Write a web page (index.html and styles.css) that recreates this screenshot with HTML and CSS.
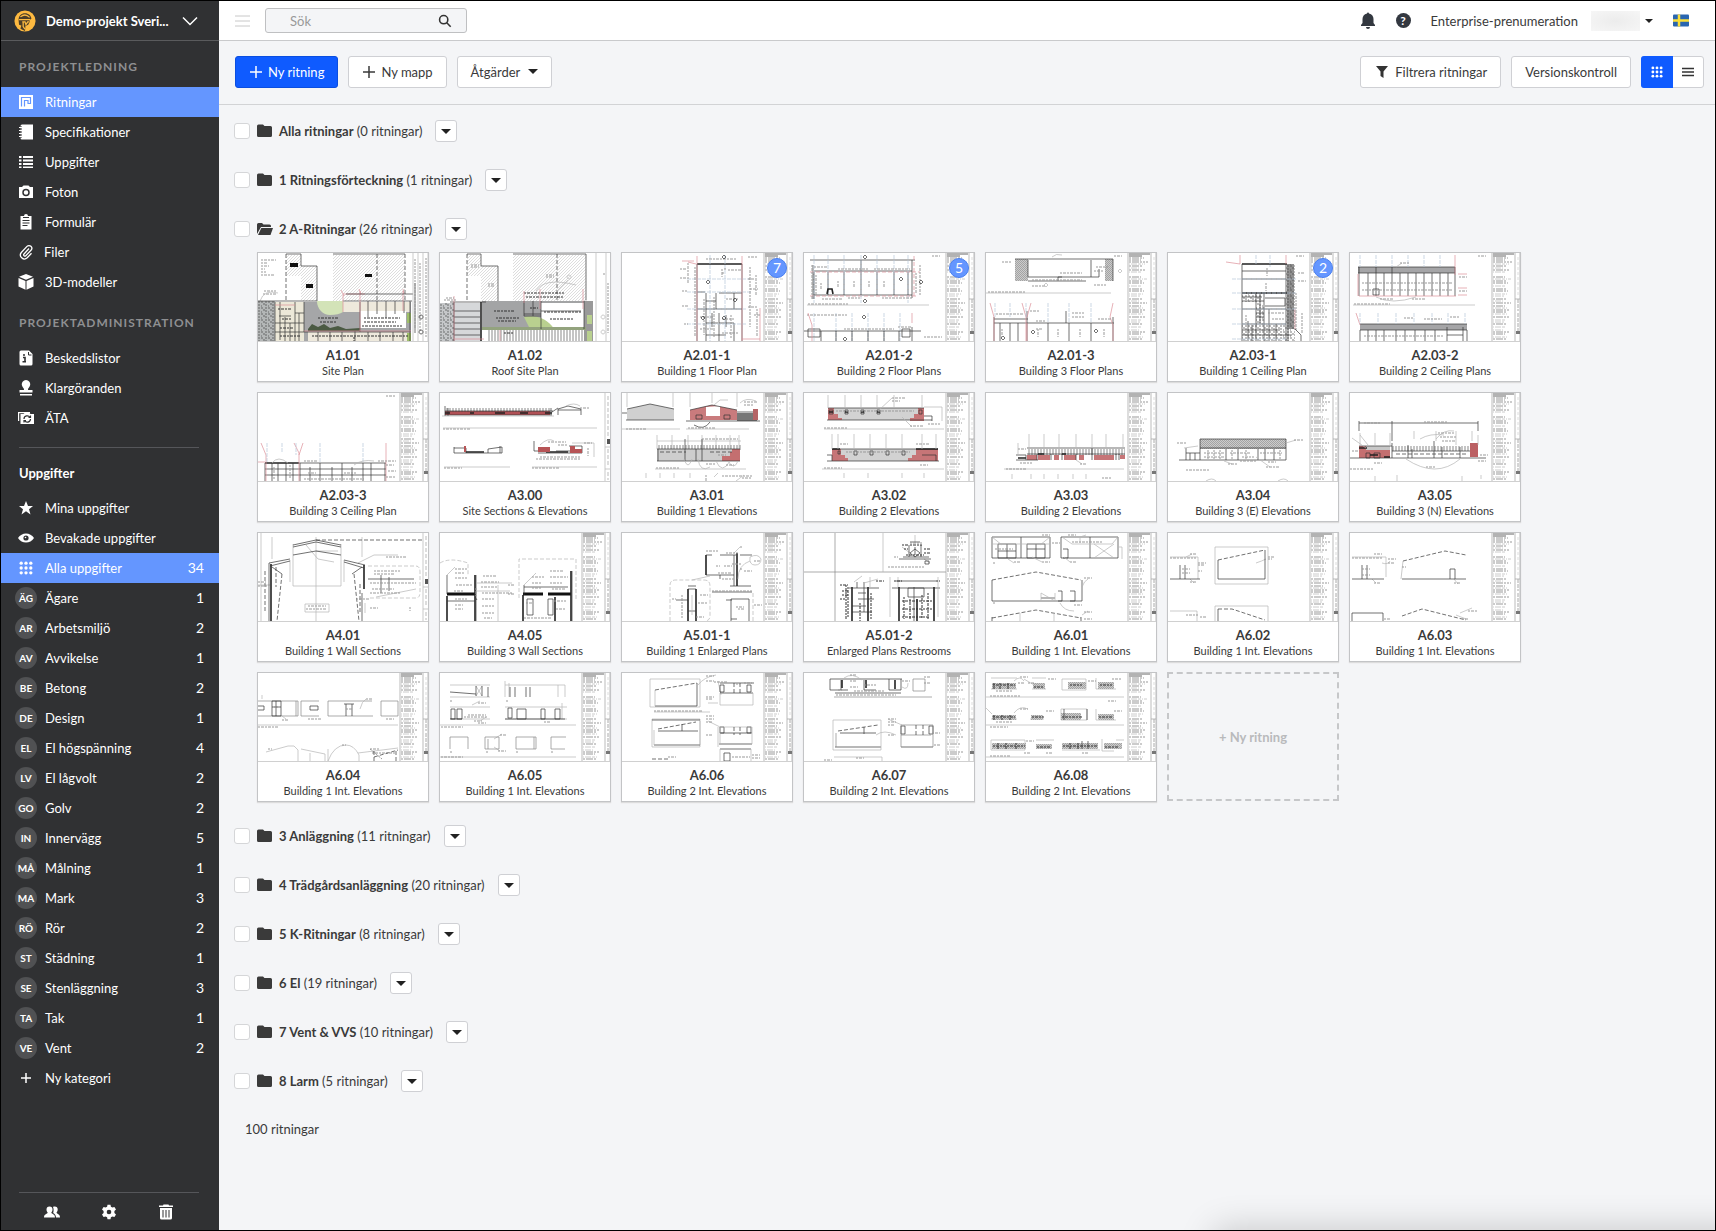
FILE: index.html
```html
<!DOCTYPE html>
<html lang="sv">
<head>
    <meta charset="UTF-8">
    <meta name="viewport" content="width=device-width, initial-scale=1.0">
    <title>Ritningar</title>
    <link rel="stylesheet" href="styles.css">
</head>
<body>
    <aside class="sidebar">
        <button class="project" type="button">
            <svg class="logo" viewBox="0 0 24 24"><circle cx="12" cy="12" r="11.5" fill="#fdb940"/><path d="M5 11c0-5 3-7.500 7-7.500s6.500 2.500 7 6l-2 1.500v2l-1.500 3-3 1.500-.5 5.500-5-2.500 1-3.500-2.500-1z" fill="#4b3d28"/><path d="M7 7.500c3-2.500 7-2.500 10 .5M5.500 10.500h12M9 13h3l1 3 2-3h1.500M10 13v5l2 3" fill="none" stroke="#fdb940" stroke-width="1.400"/></svg>
            <span class="project-name">Demo-projekt Sveri...</span>
            <svg class="chevron" viewBox="0 0 16 10"><path d="M1 1.500l7 7 7-7"/></svg>
        </button>

        <h2 class="nav-title">PROJEKTLEDNING</h2>
        <nav class="nav">
            <a class="nav-item active" href="#"><svg class="icon" viewBox="0 0 16 16"><path d="M1 1h14v14H1z"/><path d="M3.500 12.500v-9h9v6h-3M6.500 12.500v-6H10v3" fill="none" stroke="#6496ff" stroke-width="1.200"/></svg>Ritningar</a>
            <a class="nav-item" href="#"><svg class="icon" viewBox="0 0 16 16"><path d="M4 .5h11v15H4a1.500 1.500 0 0 1-1.500-1.500v-12A1.500 1.500 0 0 1 4 .5z"/><path d="M0 3.500h4M0 6.500h4M0 9.500h4M0 12.500h4" stroke="#303133" stroke-width="2"/><path d="M1 3.500h3M1 6.500h3M1 9.500h3M1 12.500h3" stroke="#fff"/></svg>Specifikationer</a>
            <a class="nav-item" href="#"><svg class="icon" viewBox="0 0 16 16"><path d="M1 2h2.500v2H1zM5 2h10v2H5zM1 5.500h2.500v2H1zM5 5.500h10v2H5zM1 9h2.500v2H1zM5 9h10v2H5zM1 12.500h2.500v1.500H1zM5 12.500h10v1.500H5z"/></svg>Uppgifter</a>
            <a class="nav-item" href="#"><svg class="icon" viewBox="0 0 16 16"><path d="M5.500 1.500h5L12 3h3v11H1V3h3z"/><circle cx="8" cy="8.500" r="3" fill="#fff" stroke="#303133" stroke-width="1.500"/></svg>Foton</a>
            <a class="nav-item" href="#"><svg class="icon" viewBox="0 0 16 16"><path d="M2.500 2H6a2 2 0 0 1 4 0h3.500v13.500h-11z"/><path d="M5 3.500h6M4.500 6.500h7M4.500 9h7M4.500 11.500h5" stroke="#303133"/></svg>Formulär</a>
            <a class="nav-item narrow" href="#"><svg class="icon" viewBox="0 0 16 16"><path d="M11 4.500L6 10a1.200 1.200 0 0 0 1.800 1.700l5.200-5.500a2.700 2.700 0 0 0-4-3.800L3.500 8.200a4 4 0 0 0 5.700 5.600l4.300-4.500" fill="none" stroke="#fff" stroke-width="1.300"/></svg>Filer</a>
            <a class="nav-item" href="#"><svg class="icon" viewBox="0 0 16 16"><path d="M8 0l7 2.800L8 5.800 1 2.800zM.5 4l7 3v8.800l-7-3.300zM15.500 4l-7 3v8.800l7-3.300z"/></svg>3D-modeller</a>
        </nav>

        <h2 class="nav-title">PROJEKTADMINISTRATION</h2>
        <nav class="nav">
            <a class="nav-item" href="#"><svg class="icon" viewBox="0 0 16 16"><path d="M3 .5h8L14.500 4v10a1.500 1.500 0 0 1-1.500 1.500H3A1.500 1.500 0 0 1 1.500 14V2A1.500 1.500 0 0 1 3 .5z"/><path d="M5 7.500h2v4M4.500 11.800H8M5 5h2" fill="none" stroke="#303133" stroke-width="1.600"/><path d="M10.500 2v3h3" fill="none" stroke="#303133"/></svg>Beskedslistor</a>
            <a class="nav-item" href="#"><svg class="icon" viewBox="0 0 16 16"><path d="M8 0a4.200 4.200 0 0 1 4 5.500C11.500 7.500 9.800 8 10 10h4.500v2.500h-13V10H6c.2-2-1.500-2.500-2-4.500A4.200 4.200 0 0 1 8 0zM2 14h12v1.500H2z"/></svg>Klargöranden</a>
            <a class="nav-item" href="#"><svg class="icon" viewBox="0 0 16 16"><path d="M0 2h12v1.200H1.200V11H0z"/><path d="M2.500 4h3l1-1h5l1 1H16v10H2.500z"/><path d="M6 9a3.200 3.200 0 0 1 6-1.500M12.500 9a3.200 3.200 0 0 1-6 1.500M12.500 5.500v2h-2M6 12.500v-2h2" fill="none" stroke="#303133" stroke-width="1.200"/></svg>ÄTA</a>
        </nav>

        <hr class="rule">
        <h2 class="tasks-title">Uppgifter</h2>
        <nav class="nav">
            <a class="nav-item" href="#"><svg class="icon" viewBox="0 0 16 16"><path d="M8 1l2 5h5l-4 3.200 1.500 5.300L8 11.300l-4.500 3.200L5 9.200 1 6h5z"/></svg>Mina uppgifter</a>
            <a class="nav-item" href="#"><svg class="icon" viewBox="0 0 16 16"><path d="M0 8c2-3 4.800-4.500 8-4.500S14 5 16 8c-2 3-4.800 4.500-8 4.500S2 11 0 8z"/><circle cx="8" cy="8" r="2.600" fill="#303133"/><circle cx="7.500" cy="7.500" r=".8" fill="#fff"/></svg>Bevakade uppgifter</a>
            <a class="nav-item active" href="#"><svg class="icon dots" viewBox="0 0 16 16"><use href="#dots"/></svg>Alla uppgifter<span class="count">34</span></a>
            <a class="nav-item" href="#"><span class="tag">ÄG</span>Ägare<span class="count">1</span></a>
            <a class="nav-item" href="#"><span class="tag">AR</span>Arbetsmiljö<span class="count">2</span></a>
            <a class="nav-item" href="#"><span class="tag">AV</span>Avvikelse<span class="count">1</span></a>
            <a class="nav-item" href="#"><span class="tag">BE</span>Betong<span class="count">2</span></a>
            <a class="nav-item" href="#"><span class="tag">DE</span>Design<span class="count">1</span></a>
            <a class="nav-item" href="#"><span class="tag">EL</span>El högspänning<span class="count">4</span></a>
            <a class="nav-item" href="#"><span class="tag">LV</span>El lågvolt<span class="count">2</span></a>
            <a class="nav-item" href="#"><span class="tag">GO</span>Golv<span class="count">2</span></a>
            <a class="nav-item" href="#"><span class="tag">IN</span>Innervägg<span class="count">5</span></a>
            <a class="nav-item" href="#"><span class="tag">MÅ</span>Målning<span class="count">1</span></a>
            <a class="nav-item" href="#"><span class="tag">MA</span>Mark<span class="count">3</span></a>
            <a class="nav-item" href="#"><span class="tag">RÖ</span>Rör<span class="count">2</span></a>
            <a class="nav-item" href="#"><span class="tag">ST</span>Städning<span class="count">1</span></a>
            <a class="nav-item" href="#"><span class="tag">SE</span>Stenläggning<span class="count">3</span></a>
            <a class="nav-item" href="#"><span class="tag">TA</span>Tak<span class="count">1</span></a>
            <a class="nav-item" href="#"><span class="tag">VE</span>Vent<span class="count">2</span></a>
            <a class="nav-item" href="#"><svg class="icon" viewBox="0 0 16 16"><path d="M8 3v10M3 8h10" stroke="#fff" stroke-width="1.500"/></svg>Ny kategori</a>
        </nav>

        <div class="sidebar-footer">
            <button type="button" aria-label="Personer"><svg class="icon" viewBox="0 0 16 16"><path d="M5.500 2.500c2 0 3 1.300 3 3 0 1.500-.6 2.300-1.200 3 .2 1.500 3.700 1.300 3.700 5H0c0-3.700 3.500-3.500 3.700-5-.6-.7-1.200-1.500-1.200-3 0-1.700 1-3 3-3z"/><path d="M9 3c.5-.4 1-.5 1.700-.5 2 0 3 1.300 3 3 0 1.500-.6 2.300-1.200 3 .2 1.500 3.500 1.300 3.500 5h-4c0-2.500-1.200-3.400-2.800-4.500C9.700 7 9.900 5 9 3z"/></svg></button>
            <button type="button" aria-label="Inställningar"><svg class="icon" viewBox="0 0 16 16"><path d="M6.500.8h3l.4 2 1.500.8 2-.7L15 5.500 13.400 7v2l1.600 1.500-1.600 2.600-2-.7-1.500.8-.4 2h-3l-.4-2-1.500-.8-2 .7L1 10.500 2.600 9V7L1 5.500l1.600-2.600 2 .7 1.500-.8z"/><circle cx="8" cy="8" r="2.300" fill="#303133"/></svg></button>
            <button type="button" aria-label="Papperskorg"><svg class="icon" viewBox="0 0 16 16"><path d="M5.500 .5h5l.5 1h4V3H1V1.500h4zM2 4h12v10a1.500 1.500 0 0 1-1.500 1.500h-9A1.500 1.500 0 0 1 2 14z"/><path d="M5 6v7.500M8 6v7.500M11 6v7.500" stroke="#303133"/></svg></button>
        </div>
    </aside>

    <div class="page">
        <header class="topbar">
            <button class="menu" type="button" aria-label="Meny"><svg viewBox="0 0 16 12"><path d="M0 1h15M0 6h15M0 11h15"/></svg></button>
            <div class="search">
                <input type="text" placeholder="Sök" aria-label="Sök">
                <svg viewBox="0 0 16 16"><circle cx="6.500" cy="6.500" r="4.700"/><path d="M10 10l4.500 4.500"/></svg>
            </div>
            <button class="top-icon bell" type="button" aria-label="Aviseringar"><svg viewBox="0 0 16 18"><path d="M7 1.500a1 1 0 0 1 2 0c3 .7 4.500 3 4.500 5.500v4l1.500 2v1H1v-1l1.500-2V7C2.500 4.500 4 2.200 7 1.500zM6 15h4a2 2 0 0 1-4 0z"/></svg></button>
            <button class="top-icon help" type="button" aria-label="Hjälp">?</button>
            <span class="plan">Enterprise-prenumeration</span>
            <button class="account" type="button" aria-label="Konto"><span class="account-name"></span><span class="caret small"></span></button>
            <button class="lang" type="button" aria-label="Svenska"><svg viewBox="0 0 16 13"><rect y=".5" width="16" height="12" rx="1" fill="#2a66b0"/><path d="M6 .5v12M0 6.500h16" stroke="#fbe03a" stroke-width="2.500"/></svg></button>
        </header>

        <div class="toolbar">
            <button class="btn primary" type="button"><svg class="plus" viewBox="0 0 12 12"><path d="M6 0v12M0 6h12"/></svg>Ny ritning</button>
            <button class="btn" type="button"><svg class="plus" viewBox="0 0 12 12"><path d="M6 0v12M0 6h12"/></svg>Ny mapp</button>
            <button class="btn" type="button">Åtgärder<span class="caret big"></span></button>
            <button class="btn filter" type="button"><svg class="funnel" viewBox="0 0 12 12"><path d="M0 0h12L7.500 5.500V12l-3-2V5.500z"/></svg>Filtrera ritningar</button>
            <button class="btn" type="button">Versionskontroll</button>
            <div class="view">
                <button class="on" type="button" aria-label="Rutnät"><svg viewBox="0 0 16 16"><use href="#dots"/></svg></button>
                <button type="button" aria-label="Lista"><svg viewBox="0 0 16 16"><path d="M2 4.500h12M2 8h12M2 11.500h12" stroke="#333" stroke-width="1.400"/></svg></button>
            </div>
        </div>

        <main class="content">
            <div class="folder"><input type="checkbox" id="f0"><svg class="folder-icon" viewBox="0 0 16 14"><use href="#closed"/></svg><label for="f0"><b>Alla ritningar</b> (0 ritningar)</label><button type="button" aria-label="Val"><span class="caret"></span></button></div>
            <div class="folder"><input type="checkbox" id="f1"><svg class="folder-icon" viewBox="0 0 16 14"><use href="#closed"/></svg><label for="f1"><b>1 Ritningsförteckning</b> (1 ritningar)</label><button type="button" aria-label="Val"><span class="caret"></span></button></div>
            <div class="folder open"><input type="checkbox" id="f2"><svg class="folder-icon" viewBox="0 0 16 14"><path d="M0 12V2.500A1.500 1.500 0 0 1 1.500 1H5l1.500 1.500h6A1.500 1.500 0 0 1 14 4v1H4z"/><path d="M4.300 6H16l-2.500 7H1z"/></svg><label for="f2"><b>2 A-Ritningar</b> (26 ritningar)</label><button type="button" aria-label="Val"><span class="caret"></span></button></div>

            <div class="cards">
                <a class="card" href="#">
                    <svg class="thumb" viewBox="0 0 170 88">
                        <rect x="28" y="2" width="15" height="21" fill="url(#hatch)"/><rect x="43" y="13" width="16" height="35" fill="url(#hatch)"/><rect x="75" y="2" width="72" height="46" fill="url(#hatch)"/>
                        <path class="k" d="M28 1h15v12h16v35M75 1h72"/><path class="k dash" d="M28 1v48M147 1v47M119 1v46"/>
                        <path d="M32 10h8v4h-8zM48 31h7v4h-7zM107 21h7v3h-7z" fill="#111"/>
                        <path class="n" d="M3 7h15M3 10h6M3 13h8M3 16h4M3 19h5M3 22h14M6 38h12M5 41h14"/><path class="g" d="M2 48q4-12 18-8"/>
                        <path d="M0 48h17v40H0z" fill="#b4b7b7"/><path d="M17 49h29v39H17z" fill="#ece8d8"/><path d="M46 49h107v39H46z" fill="#a5a6a8"/><path d="M85 49h67v10H85zM50 79h103v9H50z" fill="#eee9dc"/><path d="M102 58h46v17h-46z" fill="#fff"/>
                        <path d="M59 48h26v11c-3 2-7 3-13 3-7 0-13-6-13-14z" fill="#d3e3b8"/><path d="M50 76l4-5 6 3 6-3 6 4 8-2 8 3 14-1v3H50z" fill="#4b5a43"/><path d="M149 60h4v10h-4zM149 80h4v8h-4z" fill="#9fbf6a"/>
                        <path class="k" d="M0 48h59M85 48h69M17 49v39M37 49v39M46 49v30M102 49v30M110 48v16M119 48v13M128 48v17M137 48v13M146 48v12M152 48v40M17 70h29M17 79h136M37 60h9M21 63h12M97 78v10M60 79v9M72 79v9M84 79v9M110 79v9M122 79v9M135 79v9M145 79v9M22 49v38M27 64v24M32 70v18M41 60v28"/>
                        <rect y="48" width="17" height="40" fill="url(#specks)"/><path class="n k" d="M20 56h14M24 66h10M22 75h14M106 65h36M106 69h32M104 73h40M54 83h96M22 83h20M60 65h20M62 69h16M96 84v4"/>
                        <path class="r" d="M85 42v17M102 38v40M145 38v20M46 78h107M85 41h22M17 52h20"/><path class="r" d="M83 37l3 6M101 36l2 5M145 36l1 5"/><path class="k" d="M88 41h67M157 30v50"/>
                        <path class="g" d="M155 0v88M160 0v88M165 0v88M170 0v88"/><path class="n" d="M157 6v70M162 10v68M168 5v80"/><path class="k" d="M163 62a2 2 0 1 0 .1 0zM163 77a2 2 0 1 0 .1 0z"/>
                    </svg>
                    <b>A1.01</b><span>Site Plan</span>
                </a>
                <a class="card" href="#">
                    <svg class="thumb" viewBox="0 0 170 88">
                        <rect x="27" y="2" width="14" height="21" fill="url(#hatch)"/><rect x="41" y="13" width="17" height="35" fill="url(#hatch)"/><rect x="73" y="2" width="73" height="46" fill="url(#hatch)"/>
                        <path class="k" d="M27 1h14v12h17v35M73 1h73v46"/><path class="k dash" d="M27 1v48M117 1v46"/>
                        <path class="n" d="M31 12h8M31 14h8M48 31h7M48 33h7M106 22h8M106 24h8"/>
                        <path d="M0 50h14v38H0z" fill="#c5c7c9"/><path d="M14 50h26v38H14z" fill="#d6d8da"/><path d="M42 48h111v28H42z" fill="#a3a4a5"/><path d="M144 48h9v40h-9z" fill="#999"/>
                        <path d="M101 50h43v25h-43z" fill="#fff"/><path d="M84 64c10-2 20 0 28 9l2 3H90zM147 62h5v9h-5zM147 78h5v10h-5z" fill="#b9d08f"/><path d="M42 74h104v3H42z" fill="#93a37e"/>
                        <rect x="48" y="77" width="96" height="11" fill="url(#ribs)"/>
                        <path class="k thick" d="M41 49v39"/><path class="k" d="M10 49h36M14 49v39M14 58h26M14 64h26M14 70h26M14 76h26M14 82h26M84 48v15h17M93 48v15M101 48v28M101 58h40M84 61h17M144 48v28"/>
                        <path class="n k" d="M54 58h20M56 65h24M58 68h18M104 59h38M110 66h24M84 40h40M86 44h38M90 55h8M64 80h10"/>
                        <path class="r" d="M14 43v45M100 36v20M84 38v12M60 77v11M14 86h30M143 36v20"/><path class="g" d="M96 38q8-14 40-6M129 22a2 2 0 1 0 .1 0M128 27l-10 10M163 62a2 2 0 1 0 .1 0M163 77a2 2 0 1 0 .1 0M156 0v88M166 0v88M146 2v46"/>
                        <path class="n" d="M164 20v3M168 30v50M4 47h12M6 45h8"/><rect y="50" width="14" height="38" fill="url(#specks)"/>
                    </svg>
                    <b>A1.02</b><span>Roof Site Plan</span>
                </a>
                <a class="card" href="#">
                    <svg class="thumb" viewBox="0 0 170 88">
                        <path class="k thick" d="M75 11h45"/><path class="k" d="M75 11v77M120 11v77M75 39h8M75 56h45M84 40v48M94 40v16M84 48h10M97 40h23M97 60v28M104 62v12M112 70v18M84 70h12M90 60v14M84 82h20M112 40v16M97 70h15"/>
                        <path class="b" d="M65 26h64M65 56h60M65 71h60M88 2v86M103 2v86M65 39h64"/><path class="r" d="M75 3v85M120 3v85M138 55v33M120 86h18M66 9l8 2M60 8h12"/>
                        <path class="n" d="M58 16h6M58 25h6M60 38h5M60 53h6M62 71h4M102 16h2M100 20h3M106 17h14M126 4h10M126 26h6M128 36h8M126 54h10M132 62h6M78 64h14M78 76h14M100 66h12M100 80h16M84 6h30M104 46h12"/>
                        <path class="n" d="M82 46v36M92 44v40M100 16v8M109 62v24M134 22v20M128 14v60M135 56v28M73 14v70M66 10v20"/>
                        <path class="k" d="M86 27l2 2-2 2-2-2zM113 45l2 2-2 2-2-2zM102 63l2 2-2 2-2-2zM81 63l2 2-2 2-2-2zM102 2l2 2-2 2-2-2z"/>
                        <use href="#titleblock"/>
                    </svg>
                    <i class="badge">7</i><b>A2.01-1</b><span>Building 1 Floor Plan</span>
                </a>
                <a class="card" href="#">
                    <svg class="thumb" viewBox="0 0 170 88">
                        <path class="k" d="M6 7h105M10 19v27M24 19v23M40 19v23M57 7v35M73 19v23M90 19v23M104 19v23M10 42h98M10 18h98M108 7v38M9 12v34"/><path class="r dash" d="M6 19h110M6 43h108M110 3v42"/>
                        <path class="b" d="M10 2v48M24 2v40M40 2v40M57 2v48M73 2v40M90 2v40M104 2v48M10 60v28M32 60v28M48 60v28M64 60v28M80 60v28M96 60v28"/>
                        <path class="g" d="M3 52h122"/><path class="n" d="M4 51h40M17 30v6M34 28v6M50 28v6M65 28v6M80 28v6M10 14h14M34 16h30M70 16h36M18 46h20M44 45h12M78 45h30M128 3h8M112 20v20M116 12v30M3 62h40M40 76h50M94 74h14M120 84h18M8 12v34M12 22v20"/>
                        <path class="k thick" d="M23 41l1-5h4l1 5"/><path class="k" d="M0 78h117M17 78v10M32 78v10M48 78v10M64 78v10M80 78v10M95 78v10M108 74v14M4 76h12v8H4zM98 76h8v8h-8zM61 2l2 2-2 2-2-2zM97 24l2 2-2 2-2-2zM117 27l2 2-2 2-2-2zM60 62l2 2-2 2-2-2zM41 84l2 2-2 2-2-2zM61 46l2 2-2 2-2-2z"/>
                        <path class="r" d="M4 60l4 12v16M108 60v10"/>
                        <use href="#titleblock"/>
                    </svg>
                    <i class="badge">5</i><b>A2.01-2</b><span>Building 2 Floor Plans</span>
                </a>
                <a class="card" href="#">
                    <svg class="thumb" viewBox="0 0 170 88">
                        <rect x="29" y="6" width="13" height="22" fill="url(#dense)"/><rect x="119" y="6" width="8" height="22" fill="url(#dense)"/>
                        <path class="k" d="M29 6h98v22M42 7v17h34M105 7v17H72v4M42 28h58M105 24h8v-8"/><path class="n" d="M46 27h50M74 20h22M16 9h10M46 33h14M108 18h10M110 14h12M108 32h12M128 3h8"/><path class="g" d="M0 40h125M66 4q4-4 10-2M134 16l2 2-2 2-2-2zM60 30l2 2-2 2-2-2z"/><path class="n" d="M2 39h38"/>
                        <path class="k" d="M8 66h34M8 70h120M8 64v24M14 70v18M24 70v18M32 70v18M41 58v30M62 70v18M83 70v18M105 70v18M127 64v24M80 58v12M47 77l2 2-2 2-2-2zM17 83l2 2-2 2-2-2zM110 76l2 2-2 2-2-2z"/>
                        <path class="r" d="M4 50l4 14v24M36 50l4 14v24M45 50l-4 14M127 50l-3 14 3 8v16M41 70v18"/><path class="b" d="M9 50v14M24 50v14M40 50v14M62 50v20M83 50v20M105 50v20"/>
                        <path class="n" d="M10 61h28M44 58h10M50 68h10M86 60h12M112 66h14M16 76v8M52 76v8M72 76v8M94 76v8M118 76v8M50 76h6M86 64h12"/>
                        <use href="#titleblock"/>
                    </svg>
                    <b>A2.01-3</b><span>Building 3 Floor Plans</span>
                </a>
                <a class="card" href="#">
                    <svg class="thumb" viewBox="0 0 170 88">
                        <path class="k thick" d="M74 11h45M74 40h45"/><path class="k" d="M74 11v77M118 11v77M74 18h44M74 26h44M74 48h22M74 56h44M74 71h44M96 40v48M88 40v48M80 68v20M74 77h38M74 82h50M84 72v16M101 56v32M108 71v17M88 60h8M88 64h8M92 40v30M74 44h20M97 45h20v8H97"/>
                        <path d="M119 11h7v65h-7z" fill="#909090"/><path d="M118 11h9v77h-9zM74 41h20v8H74zM88 50h8v38h-8zM74 72h44v16H74z" fill="url(#specks)"/><path class="r" d="M58 9l14 2M72 2v9M118 2v9M127 56v20"/>
                        <path class="b" d="M64 26h64M64 40h64M64 56h64M64 71h54M64 86h54M88 2v9M102 2v12"/><path class="n" d="M99 15v8M98 30v8M100 60h16M104 66h12M128 3h8M130 20h7M130 28h8M128 40v38M134 60v20M78 62v8"/>
                        <path class="k" d="M120 76v12M127 76l6 6v6"/>
                        <use href="#titleblock"/>
                    </svg>
                    <i class="badge">2</i><b>A2.03-1</b><span>Building 1 Ceiling Plan</span>
                </a>
                <a class="card" href="#">
                    <svg class="thumb" viewBox="0 0 170 88">
                        <path d="M8 14h97v6H8zM10 71h107v6H10z" fill="#a5a5a7"/><path class="k" d="M8 14h97M8 20h97M9 14v29M10 71h107M10 77h107M10 77v11M117 77v11"/>
                        <path class="k" d="M18 20v23M26 14v29M34 20v23M42 14v29M50 20v23M58 20v23M66 20v23M74 20v23M82 20v23M90 20v23M98 20v23M105 14v29M18 77v11M26 77v11M34 77v11M46 77v11M55 77v11M65 77v11M75 77v11M85 77v11M97 74v14M113 74v14M97 82h16M23 36h6v6h-6z"/>
                        <path class="r" d="M9 43h97M8 21v22M105 2v20M108 21h9M108 35h9M108 42h9M6 60l4 12"/><path class="b" d="M10 2v12M26 2v12M42 2v12M58 2v12M74 2v12M90 2v12M10 60v11M28 60v11M46 60v11M64 60v11M82 60v11M98 60v11M115 60v11"/>
                        <path class="g" d="M3 52h122M46 14l6-4M26 44q16 8 40 0"/><path class="n" d="M4 51h36M50 10h10M12 30h90M12 37h90M30 46h14M62 46h14M54 65h10M74 66h18M100 64h10M14 83h80M128 3h8M109 24h8M109 38h8"/>
                        <use href="#titleblock"/>
                    </svg>
                    <b>A2.03-2</b><span>Building 2 Ceiling Plans</span>
                </a>

                <a class="card" href="#">
                    <svg class="thumb" viewBox="0 0 170 88">
                        <path class="k thick" d="M7 70h34"/><path class="k" d="M41 70h87M7 70v18M14 70v18M20 70v18M28 70v18M35 70v18M42 70v18M62 70v18M84 70v18M105 70v18M127 70v18M113 70v18M7 82h121M7 76h121M52 74v14M74 74v14M94 74v14"/>
                        <path class="r" d="M3 50l5 12v26M36 50l5 10v28M45 50l-4 12M0 69h7M128 50v38"/><path class="b" d="M9 50v20M24 50v10M38 50v12M62 50v20M105 50v20"/>
                        <path class="g" d="M14 70q6-8 16 0M96 72q8-6 20-4"/><path class="n" d="M16 74v12M32 72v14M46 68h14M120 68h18M128 72h8M130 78h8M128 84h10M128 3h9M50 80h8M86 80h12M46 86h60"/>
                        <use href="#titleblock"/>
                    </svg>
                    <b>A2.03-3</b><span>Building 3 Ceiling Plan</span>
                </a>
                <a class="card" href="#">
                    <svg class="thumb" viewBox="0 0 170 88">
                        <path d="M5 18h105v4H5z" fill="#b05055"/><rect x="5" y="15" width="106" height="4" fill="url(#ribs)"/><path class="k" d="M5 18h108M5 22h107M5 13v10M8 15v8M111 15v7M118 22v-6l10-3 13 3v6M118 17h23M112 19l6-4"/><path class="k thick" d="M5 20h5M30 20h4M55 20h10M80 20h8M105 20h7"/>
                        <path class="g" d="M2 23h112M3 35h154M4 74h66M92 74h65M126 13q8-4 14 0M100 52q8-8 14-4M132 50h22v14"/><path class="n" d="M3 36h28M4 75h18M92 75h28M140 15h10M108 49h18M118 52h10M144 50h8M100 64h40M96 66h44M148 55v8"/>
                        <path class="k" d="M14 54v6h12v-5H14M26 60h36v-6l-14 2v4M94 48v10h14M98 60h44M129 53h13v7M116 58h14"/><path class="k thick" d="M26 59h18M106 59h22"/><path d="M24 53h2v6h-2zM98 54h12v5H98zM130 53h5v3h-5zM130 56h12v4h-12z" fill="#b65456"/><path class="k" d="M60 53v7"/>
                        <use href="#edge"/>
                    </svg>
                    <b>A3.00</b><span>Site Sections &amp; Elevations</span>
                </a>
                <a class="card" href="#">
                    <svg class="thumb" viewBox="0 0 170 88">
                        <path d="M5 27V16l23-5 24 5v11z" fill="#d0d0d0"/><path d="M68 27V17l22-5 25 5v10z" fill="#c97b7d"/><path d="M84 14l14-1v10H84z" fill="#fff"/><path d="M115 20h20v8h-20z" fill="#777"/><path d="M131 16h5v11h-5z" fill="#b56466"/>
                        <path class="k" d="M5 16l23-5 24 5M68 17l22-5 25 5M4 27h48M64 28h74M74 22h6v4h-6zM102 22h6v4h-6zM115 19h16M0 20h5M72 32q10 6 16-3"/><path class="g" d="M5 0v14M51 0v14M68 0v14M90 0v10M115 0v14M0 36h58M64 36h63M92 12l6-5h8M118 10q6-6 16-2"/><path class="n" d="M4 36h20M66 35h28M122 9h14M122 12h10"/>
                        <path class="g" d="M35 42v14M50 42v14M66 42v14M80 42v14M94 42v14M108 42v14M117 42v14M35 48h84M33 76h91"/><rect x="35" y="52" width="84" height="5" fill="url(#ribs)"/><path d="M35 56h83v12H35z" fill="#cdcdcd"/><path d="M110 56h8v12h-18v-5h8v-4h2z" fill="#c46f70"/>
                        <path class="k" d="M35 56h83M35 68h83M36 56v12M74 56v12M63 46v22M80 46v22"/><path class="k dash" d="M38 59h26M88 59h24"/><path class="g" d="M62 66q4 12 8 0M76 66q2 14 12 8M94 68q6 14 14 0M106 68q6 10 10 0"/><path class="n" d="M34 75h24M80 46h36M96 62h8M84 71h10M104 72h8M84 82v6M100 83h30M120 85h10"/>
                        <path class="g" d="M24 80v5M38 80v5M52 80v5M68 80v5M92 84l4-4M114 88l8-6"/>
                        <use href="#titleblock"/>
                    </svg>
                    <b>A3.01</b><span>Building 1 Elevations</span>
                </a>
                <a class="card" href="#">
                    <svg class="thumb" viewBox="0 0 170 88">
                        <path d="M24 15h96v12H24zM28 56h106v12H28z" fill="#d2d2d2"/><path d="M24 15h6v6h4v4h4v2H24zM120 15h-6v6h-4v4h-4v3h14zM28 56h9v6h4v3h3v3H28zM134 56h-22v6h-4v3h-4v3h30z" fill="#c67577"/>
                        <path class="k" d="M23 27h105M24 15h96M28 56h106M23 68h112M120 23h8v5M23 62h5v6M118 62h14v6M25 17h4v4h-4zM41 17h3v4h-3zM57 17h3v4h-3zM73 17h3v4h-3zM115 17h3v4h-3zM34 58h2v3h-2zM50 58h3v4h-3zM66 58h3v4h-3zM82 58h3v4h-3zM98 58h3v4h-3z"/><path class="k thick" d="M28 56h8M112 56h22M41 19h3M57 19h3M73 19h3M25 19h4"/>
                        <path class="g" d="M24 2v13M41 2v13M57 2v13M73 2v13M90 2v13M118 2v13M28 41v15M34 41v15M50 41v15M66 41v15M82 41v15M98 41v15M118 41v15M132 41v15M20 36h120M18 76h122M74 18l14-13M98 24l10 10M120 14h18v14M40 80v5M64 80v5M98 80v5M120 80v5"/>
                        <path class="n" d="M20 35h24M20 75h18M88 5h14M88 8h8M106 33h14M36 51h8M112 51h14M116 72h8M124 31h12M32 18h78M42 59h64"/>
                        <use href="#titleblock"/>
                    </svg>
                    <b>A3.02</b><span>Building 2 Elevations</span>
                </a>
                <a class="card" href="#">
                    <svg class="thumb" viewBox="0 0 170 88">
                        <rect x="41" y="56" width="98" height="6" fill="url(#ribs)"/><path d="M41 62h10v5H41zM52 62h12v5H52zM68 62h5v5h-5zM78 62h12v5H78zM93 62h5v5h-5zM108 62h20v5h-20zM134 62h5v4h-5z" fill="#c67577"/>
                        <path class="k" d="M30 67h22M41 55h98M41 61h98M30 62h10v5M51 61v6M65 61v6M76 61v6M90 61v6M106 55v12M130 61v6M133 61v6"/><path class="k thick" d="M32 65h8M52 61h6M76 61h4"/><path class="g" d="M32 50v12M43 41v14M58 41v14M73 41v14M90 41v14M106 41v14M120 41v14M137 41v14M18 76h120M90 67l6 4M26 81v5M45 81v5M58 81v5M72 81v5M87 81v5M100 81v5"/>
                        <path class="n" d="M20 76h20M32 56h8M34 70h12M94 71h6M116 85h10"/>
                        <use href="#titleblock"/>
                    </svg>
                    <b>A3.03</b><span>Building 2 Elevations</span>
                </a>
                <a class="card" href="#">
                    <svg class="thumb" viewBox="0 0 170 88">
                        <path d="M32 46h86v10H32z" fill="#c4c4c4"/><rect x="32" y="46" width="86" height="10" fill="url(#dense)"/><path class="k" d="M32 46h86M32 55h86M11 67h107M32 46v21M118 46v21M18 60h14M18 55v12M22 60v7M27 60v7M58 56v11M70 56v11M90 56v11M97 56v11M106 56v11"/>
                        <path class="n" d="M36 60h20M36 64h20M62 60h20M92 60h22M74 64h12M40 57v9M46 57v9M52 57v9M64 57v9M78 57v9M112 57v9"/><path class="g" d="M16 55l14-2M118 50l10-3M56 68l8 3M88 64l14 10M38 88q6-4 10 0M110 88q6-4 10 0"/><path class="n" d="M9 50h9M126 47h10M60 71h10M72 68h16M98 74h14M100 69h8M18 77h24"/>
                        <use href="#titleblock"/>
                    </svg>
                    <b>A3.04</b><span>Building 3 (E) Elevations</span>
                </a>
                <a class="card" href="#">
                    <svg class="thumb" viewBox="0 0 170 88">
                        <path d="M9 53h7v4h24v8H9z" fill="#c46f70"/><path d="M16 53h24v4H16z" fill="#c8c8c8"/><path d="M120 50h8v14h-8z" fill="#bb6063"/><rect x="42" y="53" width="78" height="5" fill="url(#ribs)"/>
                        <path class="k" d="M9 30h119M9 28v10M42 28v20M128 28v10M0 65h136M9 53h33M42 58h78M42 50v15M58 52v13M62 56v9M84 48v17M92 54v11M110 54v11M16 60h4v5h-4zM24 60h6v5h-6z"/><path class="k thick" d="M9 55h8M20 62h8M34 64h6"/><path class="k dash" d="M46 61h70"/>
                        <path class="g" d="M10 40v12M25 40v12M40 40v12M64 38v8M86 38v10M106 38v14M122 38v10M128 42v10M86 46q8-10 18-8M56 66q30 20 54 0M10 42l8 10M2 45l14 10M70 46q10-6 24-4M25 83v5M47 82v6M112 83v5M131 82v4"/><path class="n" d="M14 30h16M74 29h24M88 40h16M90 44h16M0 76h24M24 70h8M76 74h10M130 62h8M128 68h8M2 58h6M92 48h14"/>
                        <use href="#titleblock"/>
                    </svg>
                    <b>A3.05</b><span>Building 3 (N) Elevations</span>
                </a>

                <a class="card" href="#">
                    <svg class="thumb" viewBox="0 0 170 88">
                        <path class="g" d="M35 11v42h48V11M3 0v88M14 4v22M58 4v84M104 4v20M32 27v22M86 27v22M58 18h22M48 12l12 14 16 3M100 30l16-8h24M0 52h12M118 64l40-8M107 70v10"/>
                        <path class="k" d="M35 12l23-5 25 5M11 30l21-4M86 27l21 5"/><path class="k thick" d="M13 31v57M106 32v24"/><path class="k" d="M35 14l23-5 25 5M12 33l20-5M86 29l20 6M14 34l10 7M104 34l-10 7M11 30v58M104 60v28M35 22l23-4 25 4M110 46h46M123 42v18M131 44v14"/>
                        <path class="k dash" d="M24 41l-5 47M96 41l5 47M58 7h106M7 38v40M18 34v20M102 51v28"/><path class="g dash" d="M110 33h48q4 0 4 6v20q0 6-4 6h-48"/><path class="n" d="M0 49h8M0 53h10M116 38h26M116 41h20M112 50h46M114 56h22M112 60h30M98 66h14M112 75h8M128 24h20M50 73h18M48 76h20M152 74v4"/><path class="g" d="M47 71h24v8H47z"/>
                        <use href="#edge"/>
                    </svg>
                    <b>A4.01</b><span>Building 1 Wall Sections</span>
                </a>
                <a class="card" href="#">
                    <svg class="thumb" viewBox="0 0 170 88">
                        <path class="k fat" d="M7 61h28M83 61h20M108 61h23"/><path class="k thick" d="M7 63v25M35 42v46M83 62v26M115 64v24M131 38v50"/><path class="k" d="M7 42v19M35 64l2 3M84 52v10M36 42v46M87 66h6v16h-6zM108 66h5v16h-5zM132 38v50M7 68h28M84 54h44"/><path class="g" d="M58 52v36M7 42l8-8M36 58h34M36 50h36M84 52l12-12"/>
                        <path class="g dash" d="M0 30q10-6 28 0v12M79 65V26h57v40"/><path class="n" d="M15 36h12M15 40h10M15 45h12M16 52h16M14 58h10M15 66h12M15 72h8M15 76h8M43 43h14M41 49h18M41 54h16M42 60h30M42 66h12M42 73h12M42 80h12M44 85h8M68 52h6M68 61h6M92 44h12M92 50h10M92 55h10M110 38h14M110 44h18M110 50h12M112 56h14M114 68h12M116 76h10M84 85h28M86 70h6M36 55v8"/>
                        <use href="#titleblock"/>
                    </svg>
                    <b>A4.05</b><span>Building 3 Wall Sections</span>
                </a>
                <a class="card" href="#">
                    <svg class="thumb" viewBox="0 0 170 88">
                        <path class="k thick" d="M84 22v20M115 20v33M66 56v32M74 56v32"/><path class="k" d="M84 22h6M98 22h16M84 42h28M112 22v31M98 42v4M108 53h21M90 59h40M66 53h8M66 56h8M66 78h8M109 66h18v22M109 66v22M104 67h6M109 86h6M118 22h12M54 67h12"/><path class="g dash" d="M48 88V52q0-5 6-5h28q6 0 6 6v30q0 4-4 5M131 60v28"/><path class="g" d="M112 20l6-6M116 46q0-14 12-18M128 24q8-4 11 2 0 6-6 6-6 0-5-8M70 47l18-4M70 62v20"/>
                        <path class="n" d="M84 18h12M104 20h12M118 14h3M94 33h4M102 33h8M110 31h10M122 38h8M118 36h3M132 28h6M90 58h40M78 62h8M76 70h10M114 74h8M116 76h6M132 72h8M60 62v24M96 40h14M100 46h12M74 84h8M50 66h4"/>
                        <use href="#titleblock"/>
                    </svg>
                    <b>A5.01-1</b><span>Building 1 Enlarged Plans</span>
                </a>
                <a class="card" href="#">
                    <svg class="thumb" viewBox="0 0 170 88">
                        <path class="k faint" d="M31 0v88M0 39h142"/><path class="g" d="M79 0v39M111 2v8M98 14l8 6M120 26l6 4"/><path class="k" d="M106 9h10M105 12v12M117 12v12M95 26h32M99 24h26M111 14v8M121 28h4v3h-4zM106 20l5-4 5 4-5 4z"/><path class="n k" d="M98 12h6M100 16h4M120 16h6M120 20h6M102 22h18M106 12h12"/><path class="n" d="M94 34h26M84 34h10M106 10h12M90 24h4"/>
                        <path class="k thick" d="M48 54v34M64 54v34M95 54v34M113 66v22M130 54v34"/><path class="k" d="M45 55h30M53 49v6M60 49v30M48 79h20M88 55h48M104 55h16v9h-16zM92 48h40M110 54v34M54 60h8M54 66h16M48 73h14"/><path class="g" d="M50 49l8-6M60 50l14-4M66 44v10M94 44v10M134 44v40M86 44v40"/><path class="n k" d="M36 52h8M38 58h6M38 62h6M36 66h5M42 52v34M44 54v30M67 60v26M56 70v18M100 64v22M106 66v20M118 62v24M124 60v26M98 68h30M98 76h30M98 84h28M72 48h8M90 48h8M132 48h4"/>
                        <use href="#titleblock"/>
                    </svg>
                    <b>A5.01-2</b><span>Enlarged Plans Restrooms</span>
                </a>
                <a class="card" href="#">
                    <svg class="thumb" viewBox="0 0 170 88">
                        <path class="k" d="M6 4h58v21H6zM35 4v21M12 11h18v14H12zM21 11v14M41 11h18v14H41zM50 11v14M75 4h57v21H75zM104 4v21M77 16h5v9h-5M41 16h18M12 18h18"/><path class="g" d="M6 11h58M6 4l10 8M64 4L54 12M76 4l10 7h40l6-7M108 11l20 14M128 11l-20 14M94 10V4l6-2M132 14h4v12"/>
                        <path class="k dash" d="M6 47l44-8 45 8M6 85l44-8 45 8"/><path class="k" d="M6 47v21h90V47M72 58h4v10h-4M84 58h5v10h-5M55 65h14M6 84v4M95 84v4"/>
                        <path class="g" d="M34 80v8M68 80v8M55 60v8M69 60v8M55 60l14 8M96 54q2-6 6-8M74 70q4 8 14 8M96 82l6-4M22 26l6 4M46 24l10 5M78 24l6 5"/>
                        <path class="n" d="M56 2h8M82 2h8M66 10h8M28 29h6M56 29h8M84 29h6M98 45h8M88 72h8M98 79h8M98 86h8M9 16h18M86 9h30M7 30h3M7 70h3"/>
                        <use href="#titleblock"/>
                    </svg>
                    <b>A6.01</b><span>Building 1 Int. Elevations</span>
                </a>
                <a class="card" href="#">
                    <svg class="thumb" viewBox="0 0 170 88">
                        <path class="g" d="M2 24h28M30 24v22M47 14h53v37H47zM47 88V73h53v15M2 78h27v10M18 24l6-3M88 30q6-2 10-4M22 46l4 4"/><path class="k dash" d="M50 27l47-10M50 76l14 0 33 11"/><path class="k" d="M2 46h30M12 32v14M17 32v14M50 27v19h47V17M50 76v12"/><path class="n" d="M22 21h6M30 30h8M30 32h6M30 38h4M14 36h8M14 40h8M100 24h6M100 26h4M2 25h26M22 49h6M18 82h12M32 84h6"/>
                        <use href="#titleblock"/>
                    </svg>
                    <b>A6.02</b><span>Building 1 Int. Elevations</span>
                </a>
                <a class="card" href="#">
                    <svg class="thumb" viewBox="0 0 170 88">
                        <path class="g" d="M2 24h34M53 28l-2 18M32 30q6 2 8-2M36 24v20M22 46l4 4M104 46l4 5M110 80l12-5M106 82l10 4"/><path class="k dash" d="M53 28l42-10 21 4M52 83l20-7 44 11"/><path class="k" d="M2 46h32M12 32v14M17 32v14M52 46h64M100 36h5v10M100 36v10M2 88v-8h31v8"/><path class="n" d="M24 21h8M38 26h8M38 30h6M52 34h4M12 36h8M12 42h8M2 25h30M24 50h6M104 50h6M118 78h10M112 86h6M34 86h6"/>
                        <use href="#titleblock"/>
                    </svg>
                    <b>A6.03</b><span>Building 1 Int. Elevations</span>
                </a>

                <a class="card" href="#">
                    <svg class="thumb" viewBox="0 0 170 88">
                        <path class="k faint" d="M0 28h40v15H0M43 43V28h18M43 43h18M70 28v15h45M70 28h44M123 43V28h17v15zM38 28v15"/><path class="k" d="M14 28h9v15h-9zM18 28v15M14 34h9M0 33h6v4H0M52 33h8v4h-8zM86 31h10M88 31v12M94 31v12"/><path class="g" d="M0 52h140M102 36q2-8 6-10M24 43l4 3M4 26v-4M8 79l22-6h6l4 4v11M43 76l24 5v7M52 80v8M70 76v12M70 88q6-16 18-16 8 0 13 10v6M100 80l40-5"/><path class="n" d="M108 26h6M24 47h6M50 46h14M128 46h8M0 54h20M112 76h10M114 80h24M112 76l12 10M16 34h4M88 36h6M84 72h4M10 76h4"/><path class="k dash" d="M116 84l24-7M116 78v10M138 78v10"/>
                        <use href="#titleblock"/>
                    </svg>
                    <b>A6.04</b><span>Building 1 Int. Elevations</span>
                </a>
                <a class="card" href="#">
                    <svg class="thumb" viewBox="0 0 170 88">
                        <path class="g" d="M10 12h40M10 24h40M65 8v16M69 10v14M65 12h60v12M118 12v12M10 34h40M10 46h40M65 34h62M122 30v16M65 46h62M0 52h136M0 84h136M32 32l8-4M40 48l6-4M54 66l8-5M54 74l6 4M36 13l6 10M42 13l-6 10"/><path class="k" d="M36 13v10M42 13v10M48 14v10M70 14v10M75 14v10M86 14v10M90 14v10M11 36h4v10h-4zM17 36h5v10h-5zM68 35h4v10h-4zM77 36h9v10h-9zM101 36h4v10h-4zM115 36h5v10h-5zM10 19l26 2M65 46h60M10 46h12"/><path class="k faint" d="M10 76V64h18v12M45 64h14v12H45zM48 66v10M76 64h20v12M76 64v12h20M94 64v12M126 64h-15v12h14"/><path class="n" d="M24 44h24M28 42h18M38 30h8M38 50h8M1 54h22M1 84h22M60 62h6M58 78h8M104 49h6M10 79h3M46 79h3M76 79h3M111 79h3M10 28h3M66 28h3M34 48h8"/>
                        <use href="#titleblock"/>
                    </svg>
                    <b>A6.05</b><span>Building 1 Int. Elevations</span>
                </a>
                <a class="card" href="#">
                    <svg class="thumb" viewBox="0 0 170 88">
                        <path class="g" d="M28 6h50v28H28zM30 46h48v28H30zM86 30h10M76 12q6-8 18-10M96 8l3 14M86 48l12 6M96 74V54M32 39h56"/><path class="k" d="M75 10v23M33 33h42M98 10h34M98 20h33M98 60h32M97 71h33M30 47h48M32 72h46M36 58h40M60 51v7M98 76h31M102 80h6v8h-6zM98 12h4v7h-4zM125 12h4v7h-4zM98 54h4v6h-4zM125 54h4v6h-4z"/><path class="g" d="M33 17v16M131 20v12H98V20M98 54h32v17H98zM32 57v15M78 48v24M98 76v12M129 76v12"/><path class="k dash" d="M33 17l42-7M36 56l38-7M112 10v10M118 10v10M112 54v8M118 54v8M30 86l16 0"/><path class="n" d="M84 3h8M84 8h8M92 9h14M84 24h8M84 26h6M84 43h8M84 46h8M84 49h6M84 62h6M32 38h48M46 84h8M110 84h18M130 82h8M130 85h8M114 11h4M122 10h8"/>
                        <use href="#titleblock"/>
                    </svg>
                    <b>A6.06</b><span>Building 2 Int. Elevations</span>
                </a>
                <a class="card" href="#">
                    <svg class="thumb" viewBox="0 0 170 88">
                        <path class="k" d="M26 6h72M26 6v11h18M37 7v10M60 7v10h12M85 6v11h12V6M31 20h66M36 60h36M60 54v7M31 74h46M97 74h32M97 53h4v8h-4zM125 53h4v8h-4z"/><path class="k faint" d="M109 6v12h12V6zM30 24h98M32 60v14M97 52h32v22M97 52v22M97 62h30"/><path class="k dash" d="M34 58l40-6M112 52v10M119 52v10"/><path class="k thick" d="M38 7v8M62 7v8M91 7v9"/><path class="g" d="M29 47h48v30H29zM30 84h48v4M40 5q8-6 18 2M72 62q8-6 20 0M84 46l14 6M98 14q6 4 6-4"/><path class="n" d="M46 2h6M46 8h6M46 14h8M60 12h12M98 8h8M120 4h6M120 10h6M32 22h60M84 46h8M84 49h8M84 52h6M84 62h6M128 60h8M130 72h6M20 87h8M52 85h8M34 17h4M50 18h30"/>
                        <use href="#titleblock"/>
                    </svg>
                    <b>A6.07</b><span>Building 2 Int. Elevations</span>
                </a>
                <a class="card" href="#">
                    <svg class="thumb" viewBox="0 0 170 88">
                        <path class="g" d="M5 5h26M5 16h26M46 5h14M46 16h14M76 6h24v11H76zM110 5v11h20M0 24h138M0 52h138M0 84h138M5 46h26M44 46h14M75 36h26v11H75zM110 36v11h20M5 67h34v10H5zM50 67h18M76 77h38M116 66v12h12M130 67h8M28 8q6-6 10 0M38 6l10 6M0 35l6 6M28 40q6-8 14-4"/>
                        <path d="M6 10h24v6H6zM47 10h12v6H47zM82 9h18v7H82zM112 9h16v7h-16zM6 42h24v5H6zM45 42h12v5H45zM75 40h20v7H75zM112 41h16v6h-16zM6 70h34v6H6zM50 71h16v5H50zM76 70h36v6H76zM118 70h18v6h-18z" fill="url(#dense)"/>
                        <path class="n k" d="M7 12h22M48 14h10M84 12h12M114 12h12M7 44h22M46 44h12M76 44h20M113 44h14M7 73h32M51 74h14M77 73h35M119 74h14M8 10v6M14 10v6M22 10v6M8 42v5M16 42v5M24 42v5M12 70v6M20 70v6M30 70v6M84 70v6M92 70v6"/><path class="k" d="M96 68v8M102 68v8M78 36v11M101 36v11"/><path class="n" d="M4 23h30M4 54h18M4 83h20M34 4h8M32 10h6M62 6h8M102 8h8M126 6h10M60 38h8M34 36h8M128 38h8M40 68h8M122 28h8M42 10h6M38 80h6M60 80h6M96 80h6M10 18h16M10 49h16"/>
                        <use href="#titleblock"/>
                    </svg>
                    <b>A6.08</b><span>Building 2 Int. Elevations</span>
                </a>
                <button class="new-card" type="button">+ Ny ritning</button>
            </div>

            <div class="folder"><input type="checkbox" id="f3"><svg class="folder-icon" viewBox="0 0 16 14"><use href="#closed"/></svg><label for="f3"><b>3 Anläggning</b> (11 ritningar)</label><button type="button" aria-label="Val"><span class="caret"></span></button></div>
            <div class="folder"><input type="checkbox" id="f4"><svg class="folder-icon" viewBox="0 0 16 14"><use href="#closed"/></svg><label for="f4"><b>4 Trädgårdsanläggning</b> (20 ritningar)</label><button type="button" aria-label="Val"><span class="caret"></span></button></div>
            <div class="folder"><input type="checkbox" id="f5"><svg class="folder-icon" viewBox="0 0 16 14"><use href="#closed"/></svg><label for="f5"><b>5 K-Ritningar</b> (8 ritningar)</label><button type="button" aria-label="Val"><span class="caret"></span></button></div>
            <div class="folder"><input type="checkbox" id="f6"><svg class="folder-icon" viewBox="0 0 16 14"><use href="#closed"/></svg><label for="f6"><b>6 El</b> (19 ritningar)</label><button type="button" aria-label="Val"><span class="caret"></span></button></div>
            <div class="folder"><input type="checkbox" id="f7"><svg class="folder-icon" viewBox="0 0 16 14"><use href="#closed"/></svg><label for="f7"><b>7 Vent &amp; VVS</b> (10 ritningar)</label><button type="button" aria-label="Val"><span class="caret"></span></button></div>
            <div class="folder"><input type="checkbox" id="f8"><svg class="folder-icon" viewBox="0 0 16 14"><use href="#closed"/></svg><label for="f8"><b>8 Larm</b> (5 ritningar)</label><button type="button" aria-label="Val"><span class="caret"></span></button></div>
            <p class="total">100 ritningar</p>
        </main>
        <div class="corner-shadow"></div>
    </div>

    <!-- shared shapes for icons and drawings -->
    <svg class="defs" aria-hidden="true">
        <defs>
            <g id="dots"><circle cx="2.500" cy="2.500" r="1.900"/><circle cx="8" cy="2.500" r="1.900"/><circle cx="13.500" cy="2.500" r="1.900"/><circle cx="2.500" cy="8" r="1.900"/><circle cx="8" cy="8" r="1.900"/><circle cx="13.500" cy="8" r="1.900"/><circle cx="2.500" cy="13.500" r="1.900"/><circle cx="8" cy="13.500" r="1.900"/><circle cx="13.500" cy="13.500" r="1.900"/></g>
            <path id="closed" d="M1.500.5H6L7.500 2h6A1.500 1.500 0 0 1 15 3.500v8a1.500 1.500 0 0 1-1.500 1.500h-12A1.500 1.500 0 0 1 0 11.500V2A1.500 1.500 0 0 1 1.500.5z"/>
            <pattern id="hatch" width="3" height="3" patternUnits="userSpaceOnUse"><path d="M-1 4L4-1" stroke="#bbb" stroke-width=".5"/></pattern>
            <pattern id="dense" width="2" height="2" patternUnits="userSpaceOnUse"><rect width="2" height="2" fill="#ccc"/><path d="M0 2L2 0" stroke="#888" stroke-width=".6"/></pattern>
            <pattern id="ribs" width="3" height="8" patternUnits="userSpaceOnUse"><path d="M1 0v8" stroke="#555" stroke-width=".7"/></pattern>
            <pattern id="specks" width="7" height="6" patternUnits="userSpaceOnUse"><path d="M0 1h2M4 0v2M5 3h2M1 3v2M3 5h1" stroke="#444" stroke-width=".7"/></pattern>
            <g id="titleblock">
                <path d="M142 0h28v88h-28z" fill="#fff"/>
                <path d="M142 0v88M165 0v88M170 0v88M165 46h5" stroke="#aaa" stroke-width=".8"/>
                <path d="M143 1h21M143 3h13" stroke="#666"/>
                <path d="M143 5h15M143 7h12M143 9h19M143 13h13M143 17h17M143 24h12M143 28h14M143 30h15M143 36h13M143 38h15M143 46h14M143 50h18M143 53h12M143 57h16M143 59h14M143 64h16M143 71h13M143 79h16M143 81h12M143 86h14" stroke="#999" stroke-dasharray="2 1 7 1 2 1"/>
                <path d="M143 11h16M143 15h10M143 19h13M143 26h18M143 33h12M143 41h15M143 43h11M143 48h10M143 55h14M143 61h15M143 67h12M143 69h11M143 74h13M143 77h10M143 84h15" stroke="#ccc" stroke-dasharray="1 1 6 1 3 1"/>
                <path d="M168 4v40" stroke="#ddd" stroke-dasharray="3 2"/><path d="M168 46v12M168 60v18" stroke="#aaa" stroke-dasharray="4 1"/><path d="M166 78h4v3h-4z" fill="#777"/>
            </g>
            <g id="edge">
                <path d="M165 0v88M165 54h5M165 76h5" stroke="#bbb" stroke-width=".8"/><path d="M168 3v40M168 56v18M168 79v8" stroke="#bbb" stroke-dasharray="4 2"/><path d="M167 46h3v5h-3z" fill="#555"/>
            </g>
        </defs>
    </svg>
</body>
</html>
```
FILE: styles.css
```css
* {
    box-sizing: border-box;
}
body {
    margin: 0;
    min-height: 100vh;
    display: flex;
    border: 1px solid #000;
    background-color: #f4f5f7;
    color: #3a3a3a;
    font-family: Lato, sans-serif;
    font-size: 13px;
    line-height: 20px;
}
button, input {
    font: inherit;
    color: inherit;
}
button {
    margin: 0;
    padding: 0;
    border: 0;
    background: none;
    cursor: pointer;
}
.defs {
    width: 0;
    height: 0;
}

/* sidebar */
.sidebar {
    width: 218px;
    flex: none;
    display: flex;
    flex-direction: column;
    background-color: #303133;
    color: #fff;
}
.project {
    height: 40px;
    flex: none;
    display: flex;
    align-items: center;
    padding: 0 20px 0 13px;
    border-bottom: 1px solid #5a5b5d;
    font-weight: bold;
    text-align: left;
}
.logo {
    width: 22px;
    height: 22px;
    margin-right: 10px;
}
.project-name {
    width: 125px;
    white-space: nowrap;
}
.chevron {
    width: 16px;
    height: 10px;
    margin-left: 11px;
    fill: none;
    stroke: #fff;
    stroke-width: 1.5;
}
.nav-title {
    margin: 16px 0 10px 18px;
    font-size: 12px;
    line-height: 20px;
    letter-spacing: 1px;
    color: #8e8f91;
}
.nav-item {
    display: flex;
    align-items: center;
    height: 30px;
    padding: 0 15px 0 17px;
    color: #fff;
    text-decoration: none;
}
.nav-item.active {
    background-color: #6496ff;
}
.icon {
    width: 16px;
    height: 16px;
    margin-right: 11px;
    fill: #fff;
}
.icon.dots {
    padding: 1px;
}
.narrow .icon {
    margin-right: 10px;
}
.tag {
    width: 22px;
    height: 22px;
    margin: 0 8px 0 -3px;
    border-radius: 50%;
    background-color: #505153;
    font-size: 10px;
    font-weight: bold;
    line-height: 22px;
    text-align: center;
}
.count {
    margin-left: auto;
    font-size: 14px;
}
.rule {
    width: 180px;
    margin: 14px 18px 15px;
    border: 0;
    border-top: 1px solid #55565a;
}
.tasks-title {
    margin: 0 0 10px 18px;
    font-size: 13px;
    line-height: 20px;
}
.sidebar-footer {
    display: flex;
    justify-content: space-around;
    align-items: center;
    height: 38px;
    margin: auto 20px 0 18px;
    padding: 0 4px;
    border-top: 1px solid #55565a;
}
.sidebar-footer .icon {
    display: block;
    margin: 0;
}

/* top bar */
.page {
    position: relative;
    flex: 1;
    min-width: 0;
    overflow: hidden;
}
.topbar {
    display: flex;
    align-items: center;
    height: 40px;
    padding: 0 26px 0 16px;
    border-bottom: 1px solid #c9cacc;
    background-color: #fff;
}
.menu svg {
    display: block;
    width: 16px;
    height: 12px;
    stroke: #c8c8c8;
}
.search {
    display: flex;
    align-items: center;
    width: 202px;
    height: 25px;
    margin: 0 auto 0 14px;
    padding: 0 14px 0 24px;
    border: 1px solid #bfc0c2;
    border-radius: 3px;
    background-color: #f4f5f7;
}
.search input {
    flex: 1;
    min-width: 0;
    padding: 0;
    border: 0;
    outline: 0;
    background: none;
}
.search input::placeholder {
    color: #999;
}
.search svg {
    width: 14px;
    height: 14px;
    fill: none;
    stroke: #333;
    stroke-width: 1.8;
}
.top-icon {
    margin-right: 20px;
}
.bell svg {
    display: block;
    width: 16px;
    height: 18px;
    fill: #333840;
}
.help {
    width: 15px;
    height: 15px;
    border-radius: 50%;
    background-color: #333840;
    color: #fff;
    font-size: 12px;
    font-weight: bold;
    line-height: 15px;
}
.account {
    display: flex;
    align-items: center;
    margin: 0 20px 0 13px;
}
.account-name {
    width: 49px;
    height: 20px;
    margin-right: 5px;
    background: radial-gradient(#ececec, #f6f6f6);
}
.lang svg {
    display: block;
    width: 16px;
    height: 13px;
}
.caret {
    display: inline-block;
    border: 5px solid transparent;
    border-top-color: #222;
    border-bottom: 0;
}
.caret.small {
    border-width: 4px 4px 0;
}
.caret.big {
    margin-left: 8px;
}

/* toolbar */
.toolbar {
    display: flex;
    align-items: center;
    gap: 10px;
    height: 64px;
    padding: 0 11px 2px 16px;
    border-bottom: 1px solid #d2d3d5;
}
.btn {
    display: flex;
    align-items: center;
    height: 32px;
    padding: 0 13px;
    border: 1px solid #cfd0d4;
    border-radius: 3px;
    background-color: #fff;
    white-space: nowrap;
}
.btn.primary {
    border-color: #0a4ee0;
    background-color: #0f5bff;
    color: #fff;
}
.filter {
    margin-left: auto;
}
.plus {
    width: 12px;
    height: 12px;
    margin-right: 6px;
    margin-left: 1px;
    stroke: currentColor;
    stroke-width: 1.5;
}
.funnel {
    width: 12px;
    height: 12px;
    margin: 0 7px 0 2px;
    fill: #333;
}
.view {
    display: flex;
    height: 32px;
    border: 1px solid #cfd0d4;
    border-radius: 3px;
    background-color: #fff;
}
.view button {
    width: 30px;
}
.view svg {
    display: block;
    width: 16px;
    height: 16px;
    margin: auto;
}
.view .on {
    width: 32px;
    margin: -1px 0 -1px -1px;
    border-radius: 3px 0 0 3px;
    background-color: #0f5bff;
}
.view .on svg {
    width: 12px;
    height: 12px;
    fill: #fff;
}

/* folders */
.content {
    padding: 15px 16px 0 15px;
}
.folder {
    display: flex;
    align-items: center;
    height: 22px;
    margin-bottom: 27px;
}
.folder.open {
    margin-bottom: 12px;
}
.folder input {
    appearance: none;
    width: 16px;
    height: 16px;
    margin: 0 7px 0 0;
    border: 1px solid #d5d6d8;
    border-radius: 3px;
    background-color: #fff;
}
.folder-icon {
    width: 16px;
    height: 14px;
    margin-right: 6px;
    fill: #3a3a3a;
}
.folder button {
    display: flex;
    align-items: center;
    justify-content: center;
    width: 22px;
    height: 22px;
    margin-left: 13px;
    border: 1px solid #cfd0d4;
    border-radius: 3px;
    background-color: #fff;
}
.total {
    margin: 0 0 0 11px;
}

/* drawing cards */
.cards {
    display: grid;
    grid-template-columns: repeat(auto-fill, 172px);
    gap: 10px;
    margin: 0 0 23px 23px;
}
.card {
    position: relative;
    display: flex;
    flex-direction: column;
    align-items: center;
    height: 130px;
    border: 1px solid #c3c4c6;
    background-color: #fff;
    box-shadow: 0 1px 1px #dcdcdc;
    color: #3a3a3a;
    text-decoration: none;
}
.card b {
    margin-top: 4px;
    line-height: 18px;
}
.card span {
    font-size: 11px;
    line-height: 14px;
}
.thumb {
    display: block;
    width: 100%;
    height: 89px;
    border-bottom: 1px solid #d0d0d0;
}
.badge {
    position: absolute;
    top: 5px;
    right: 5px;
    width: 20px;
    height: 20px;
    border: 1px solid #4a80f0;
    border-radius: 50%;
    background-color: #6496ff;
    color: #fff;
    font-size: 14px;
    font-style: normal;
    line-height: 18px;
    text-align: center;
}
.new-card {
    height: 129px;
    border: 2px dashed #c6c7c9;
    color: #b9babc;
    font-weight: bold;
}

/* line styles used in the drawings */
.thumb .k, .thumb .g, .thumb .r, .thumb .b, .thumb .n {
    fill: none;
    stroke-width: 0.7;
}
.thumb .g {
    stroke: #b4b4b4;
}
.thumb .r {
    stroke: #dd8f98;
}
.thumb .b {
    stroke: #b4c6d8;
    stroke-dasharray: 4 1;
}
.thumb .n {
    stroke: #999;
    stroke-width: 1;
    stroke-dasharray: 2 1 3 1;
}
.thumb .k {
    stroke: #333;
}
.thumb .faint {
    stroke: #888;
}
.thumb .thick {
    stroke: #222;
    stroke-width: 1.6;
}
.thumb .fat {
    stroke: #111;
    stroke-width: 3;
}
.thumb .dash {
    stroke-dasharray: 4 2;
}

.corner-shadow {
    position: absolute;
    right: -40px;
    bottom: -40px;
    width: 540px;
    height: 40px;
    box-shadow: 0 0 36px rgba(0, 0, 0, 0.2);
}
```
